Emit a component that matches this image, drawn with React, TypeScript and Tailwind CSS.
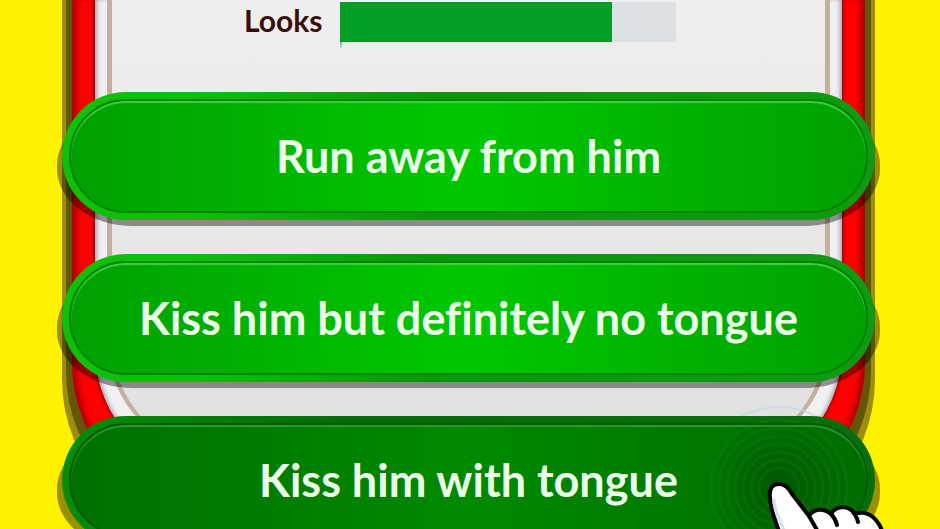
import React from 'react';

interface Choice {
  id: string;
  label: string;
  pressed?: boolean;
}

const choices: Choice[] = [
  { id: 'run', label: 'Run away from him' },
  { id: 'kiss', label: 'Kiss him but definitely no tongue' },
  { id: 'tongue', label: 'Kiss him with tongue', pressed: true },
];

const StatBar: React.FC<{ label: string; value: number }> = ({ label, value }) => (
  <div className="flex items-center pr-[199px] pl-[182px]">
    <span className="w-24 pb-1 text-[30px] leading-9 font-bold text-[#3a0d0d]">{label}</span>
    <div
      role="meter"
      aria-label={label}
      aria-valuemin={0}
      aria-valuemax={100}
      aria-valuenow={value}
      className="relative h-10 flex-1 bg-[#dbe1e5]"
    >
      <div className="h-full bg-[#039e26]" style={{ width: `${value}%` }} />
      {/* Axis tick */}
      <span className="absolute top-full left-0 h-1.5 w-0.5 bg-linear-to-b from-[#7fae90] to-[#d5dcd8]" />
    </div>
  </div>
);

const Ripples: React.FC = () => (
  <svg
    viewBox="0 0 160 160"
    className="pointer-events-none absolute -top-2 right-4 size-40"
    fill="none"
    aria-hidden="true"
  >
    <defs>
      <radialGradient id="press">
        <stop offset="0" stopColor="#004a00" stopOpacity="0.7" />
        <stop offset="0.5" stopColor="#005000" stopOpacity="0.4" />
        <stop offset="1" stopColor="#005800" stopOpacity="0" />
      </radialGradient>
    </defs>
    <circle cx="80" cy="80" r="74" fill="url(#press)" />
    {[20, 28, 36, 44, 52, 60, 68].map((r) => (
      <circle key={r} cx="80" cy="80" r={r} stroke="#1c8426" strokeWidth="3" opacity="0.22" />
    ))}
  </svg>
);

const Pointer: React.FC = () => (
  <svg
    viewBox="0 0 120 90"
    className="pointer-events-none absolute top-16 -right-2.5 h-[90px] w-[120px]"
    fill="none"
    stroke="#050505"
    strokeWidth="4"
    strokeLinecap="round"
    strokeLinejoin="round"
    aria-hidden="true"
  >
    <path
      d="M26 80 L12 46 C9 36 5 28 5 17 C4 8 8 4 14 4 C20 4 24 8 27 14 L44 36 C49 28 59 28 66 34 C71 25 84 25 90 34 C101 30 110 36 116 48 L120 60 L120 90 Z"
      fill="#fff"
    />
    <path d="M9 20 C9 30 14 38 20 52" stroke="#d3e1e9" strokeWidth="3" />
    <path d="M44 36 L52 50 M66 34 C69 37 71 41 72 45 M88 32 C91 35 92 38 93 42" />
  </svg>
);

const ChoiceButton: React.FC<{ choice: Choice }> = ({ choice }) => (
  <div className="relative">
    <span className="absolute -inset-x-[5px] top-4 -bottom-1.5 rounded-[76px/57px] bg-black/40" />
    {choice.pressed && (
      <span className="absolute -top-2.5 right-4 size-40 rounded-full border-2 border-[#c3d8e0]/70" />
    )}
    <button
      type="button"
      aria-pressed={!!choice.pressed}
      className={`relative block h-32 w-full rounded-full bg-linear-to-r p-[7px] ${
        choice.pressed
          ? 'from-[#078c08] via-[#056c07] via-35% to-[#086e0c]'
          : 'from-[#0fc00b] from-15% via-[#07980a] via-45% to-[#0f9a12]'
      }`}
    >
      <span
        className={`flex h-full items-center justify-center rounded-full border-2 bg-linear-to-r text-[45px] leading-[52px] font-bold text-[#ecffe8] [font-variant-ligatures:none] ${
          choice.pressed
            ? 'border-[#005c00] from-[#007000] via-[#008a00] to-[#006c00] shadow-[inset_0_2px_1px_#2b9a2b]'
            : 'border-[#008400] from-[#00a000] via-[#00c800] to-[#00a000] shadow-[inset_0_2px_1px_#3fd03f]'
        }`}
      >
        {choice.label}
      </span>
    </button>
    {choice.pressed && <Ripples />}
    {choice.pressed && <Pointer />}
  </div>
);

export default function App() {
  return (
    <main className="h-screen overflow-hidden bg-[#fff200] pr-[65px] pl-[62px] font-['Lato',sans-serif]">
      {/* Card frame, from the drop shadow inwards */}
      <div className="rounded-b-[160px] bg-[#9a8e0c] px-1 pb-3">
        <div className="rounded-b-[156px] bg-[#625608] px-1.5 pb-3">
          <div className="rounded-b-[153px] bg-[#ff0000] px-[23px] pb-9 shadow-[inset_8px_0_7px_-4px_#a00000,inset_-8px_0_7px_-4px_#a00000]">
            <div className="rounded-b-[130px] bg-[#f0eff2] px-3 pb-6 shadow-[0_0_4px_#400000,inset_4px_0_4px_-2px_#a8a0a8,inset_-4px_0_4px_-2px_#a8a0a8]">
              <div className="rounded-b-[115px] border-x-[5px] border-b-2 border-[#c3b09e] bg-linear-to-b from-[#efefef] to-[#e0e0e0]">
                <div className="-mx-[50px] -mb-[91px] flex flex-col gap-[50px] pt-0.5">
                  <StatBar label="Looks" value={81} />
                  <div className="flex flex-col gap-[34px]">
                    {choices.map((choice) => (
                      <ChoiceButton key={choice.id} choice={choice} />
                    ))}
                  </div>
                </div>
              </div>
            </div>
          </div>
        </div>
      </div>
    </main>
  );
}
